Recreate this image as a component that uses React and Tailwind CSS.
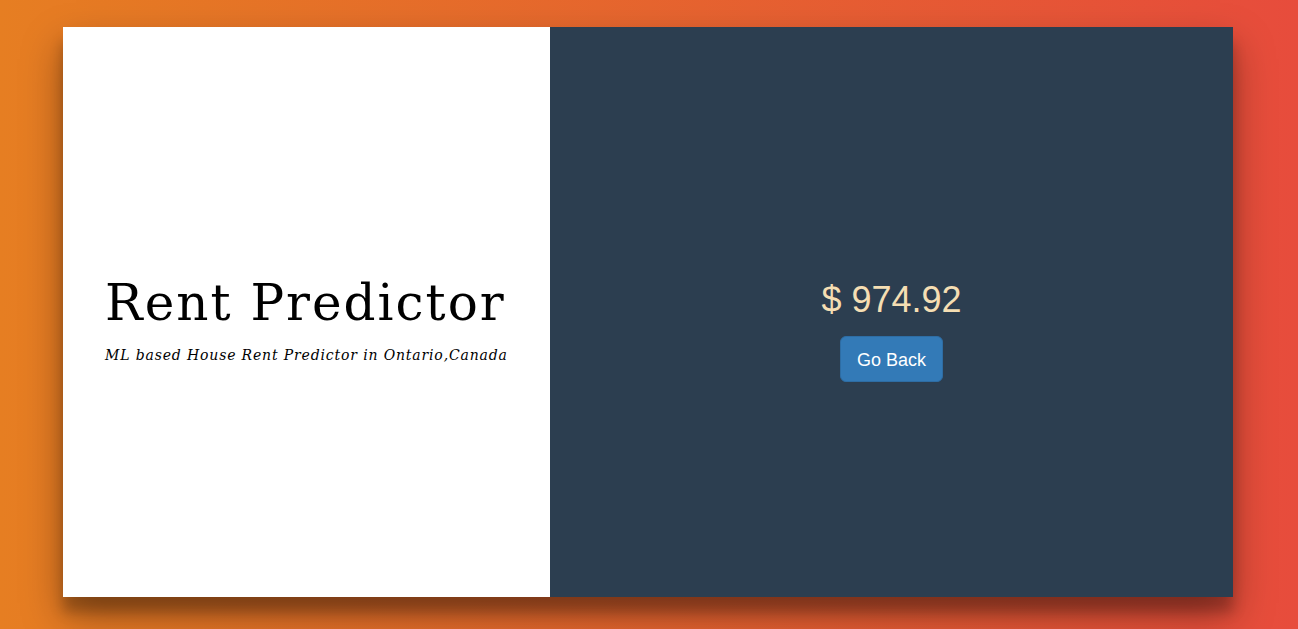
export default function App() {
  return (
    <div className="h-[629px] w-full bg-[linear-gradient(to_right,#e67e22,#e74c3c)] pt-[27px] pl-[63px] overflow-hidden">
      <div className="flex h-[570px] w-[1170px] shadow-[0_19px_38px_rgba(0,0,0,0.35),0_15px_12px_rgba(0,0,0,0.22)]">
        <div className="w-[487px] bg-white flex flex-col items-start justify-center pl-[42px] pt-[15px]">
          <h1 className="text-[50px] leading-[56px] tracking-[2px] text-black font-normal whitespace-nowrap" style={{ fontFamily: '"DejaVu Serif", serif' }}>
            Rent Predictor
          </h1>
          <p className="mt-[14px] text-[14px] leading-[20px] tracking-[0.85px] italic text-black whitespace-nowrap" style={{ fontFamily: '"DejaVu Serif", serif' }}>
            ML based House Rent Predictor in Ontario,Canada
          </p>
        </div>
        <div className="flex-1 bg-[#2c3e50] flex flex-col items-center justify-center pt-[38px]">
          <div className="text-[36px] leading-[40px] text-[#f5deb3]" style={{ fontFamily: '"Liberation Sans", Arial, sans-serif' }}>
            $ 974.92
          </div>
          <button className="mt-[16px] h-[46px] px-[16px] pt-[2px] rounded-[6px] bg-[#337ab7] border border-[#2e6da4] text-white text-[18px] leading-[24px]" style={{ fontFamily: '"Liberation Sans", Arial, sans-serif' }}>
            Go Back
          </button>
        </div>
      </div>
    </div>
  );
}
